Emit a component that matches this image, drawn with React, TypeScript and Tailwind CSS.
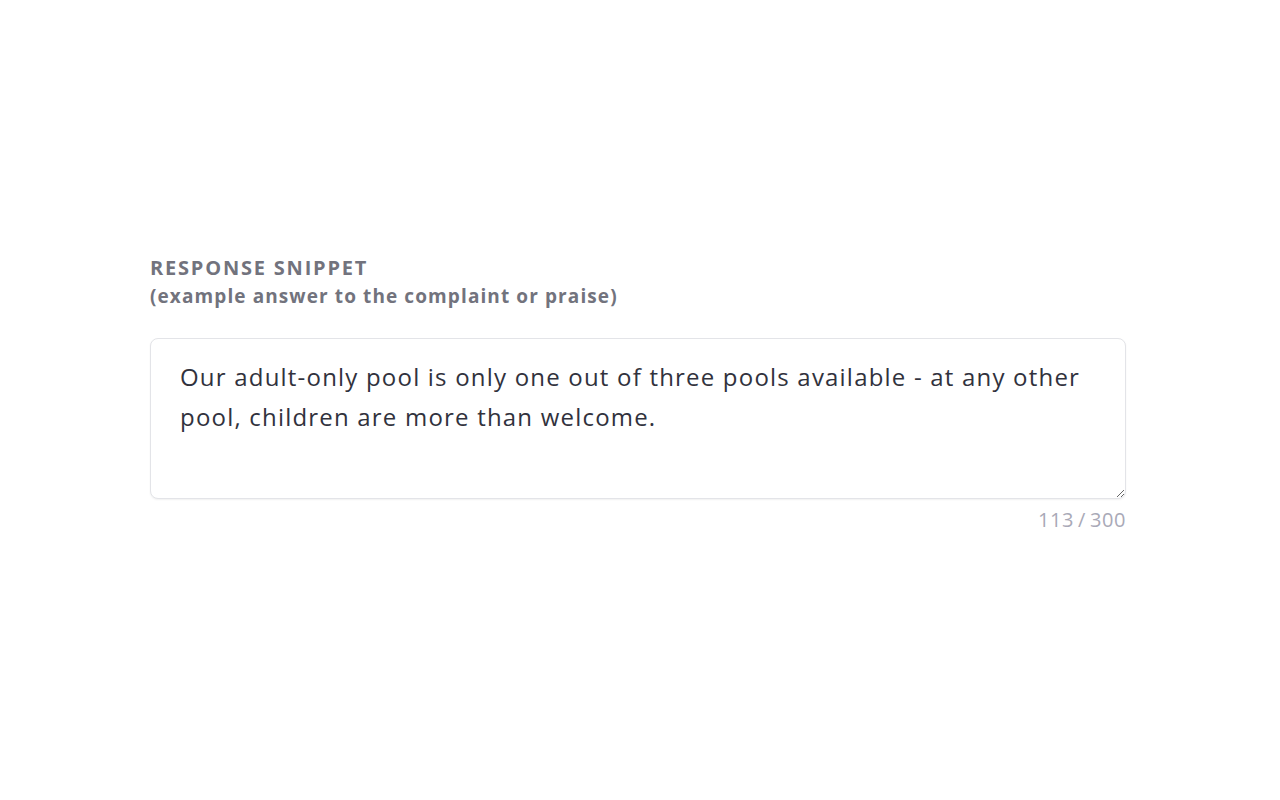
const snippet =
  'Our adult-only pool is only one out of three pools available - at any other pool, children are more than welcome.'

export default function App() {
  return (
    <main className="min-h-screen bg-white font-['Open_Sans',sans-serif]">
      <div className="ml-[150px] w-[976px] pt-[254px]">
        {/* Label */}
        <label className="block text-[#72737d] font-bold">
          <span className="block text-[20px] leading-[28px] tracking-[1.8px] uppercase">Response snippet</span>
          <span className="block text-[19px] leading-[28px] tracking-[1.1px]">
            (example answer to the complaint or praise)
          </span>
        </label>

        {/* Textarea */}
        <textarea
          readOnly
          value={snippet}
          rows={3}
          className="mt-[28px] block w-full h-[161px] rounded-lg border border-[#e3e4e8] bg-white px-[29px] pt-[18px] text-[24px] leading-[40px] tracking-[1.2px] text-[#31323d] font-['Open_Sans',sans-serif] shadow-[0_1px_2px_rgba(0,0,0,0.06)] outline-none resize-y"
        />

        {/* Counter */}
        <div className="mt-[8px] text-right text-[20px] leading-[26px] tracking-[0.6px] text-[#a9a9b7]">
          113{'\u2009'}/{'\u2009'}300
        </div>
      </div>
    </main>
  )
}
